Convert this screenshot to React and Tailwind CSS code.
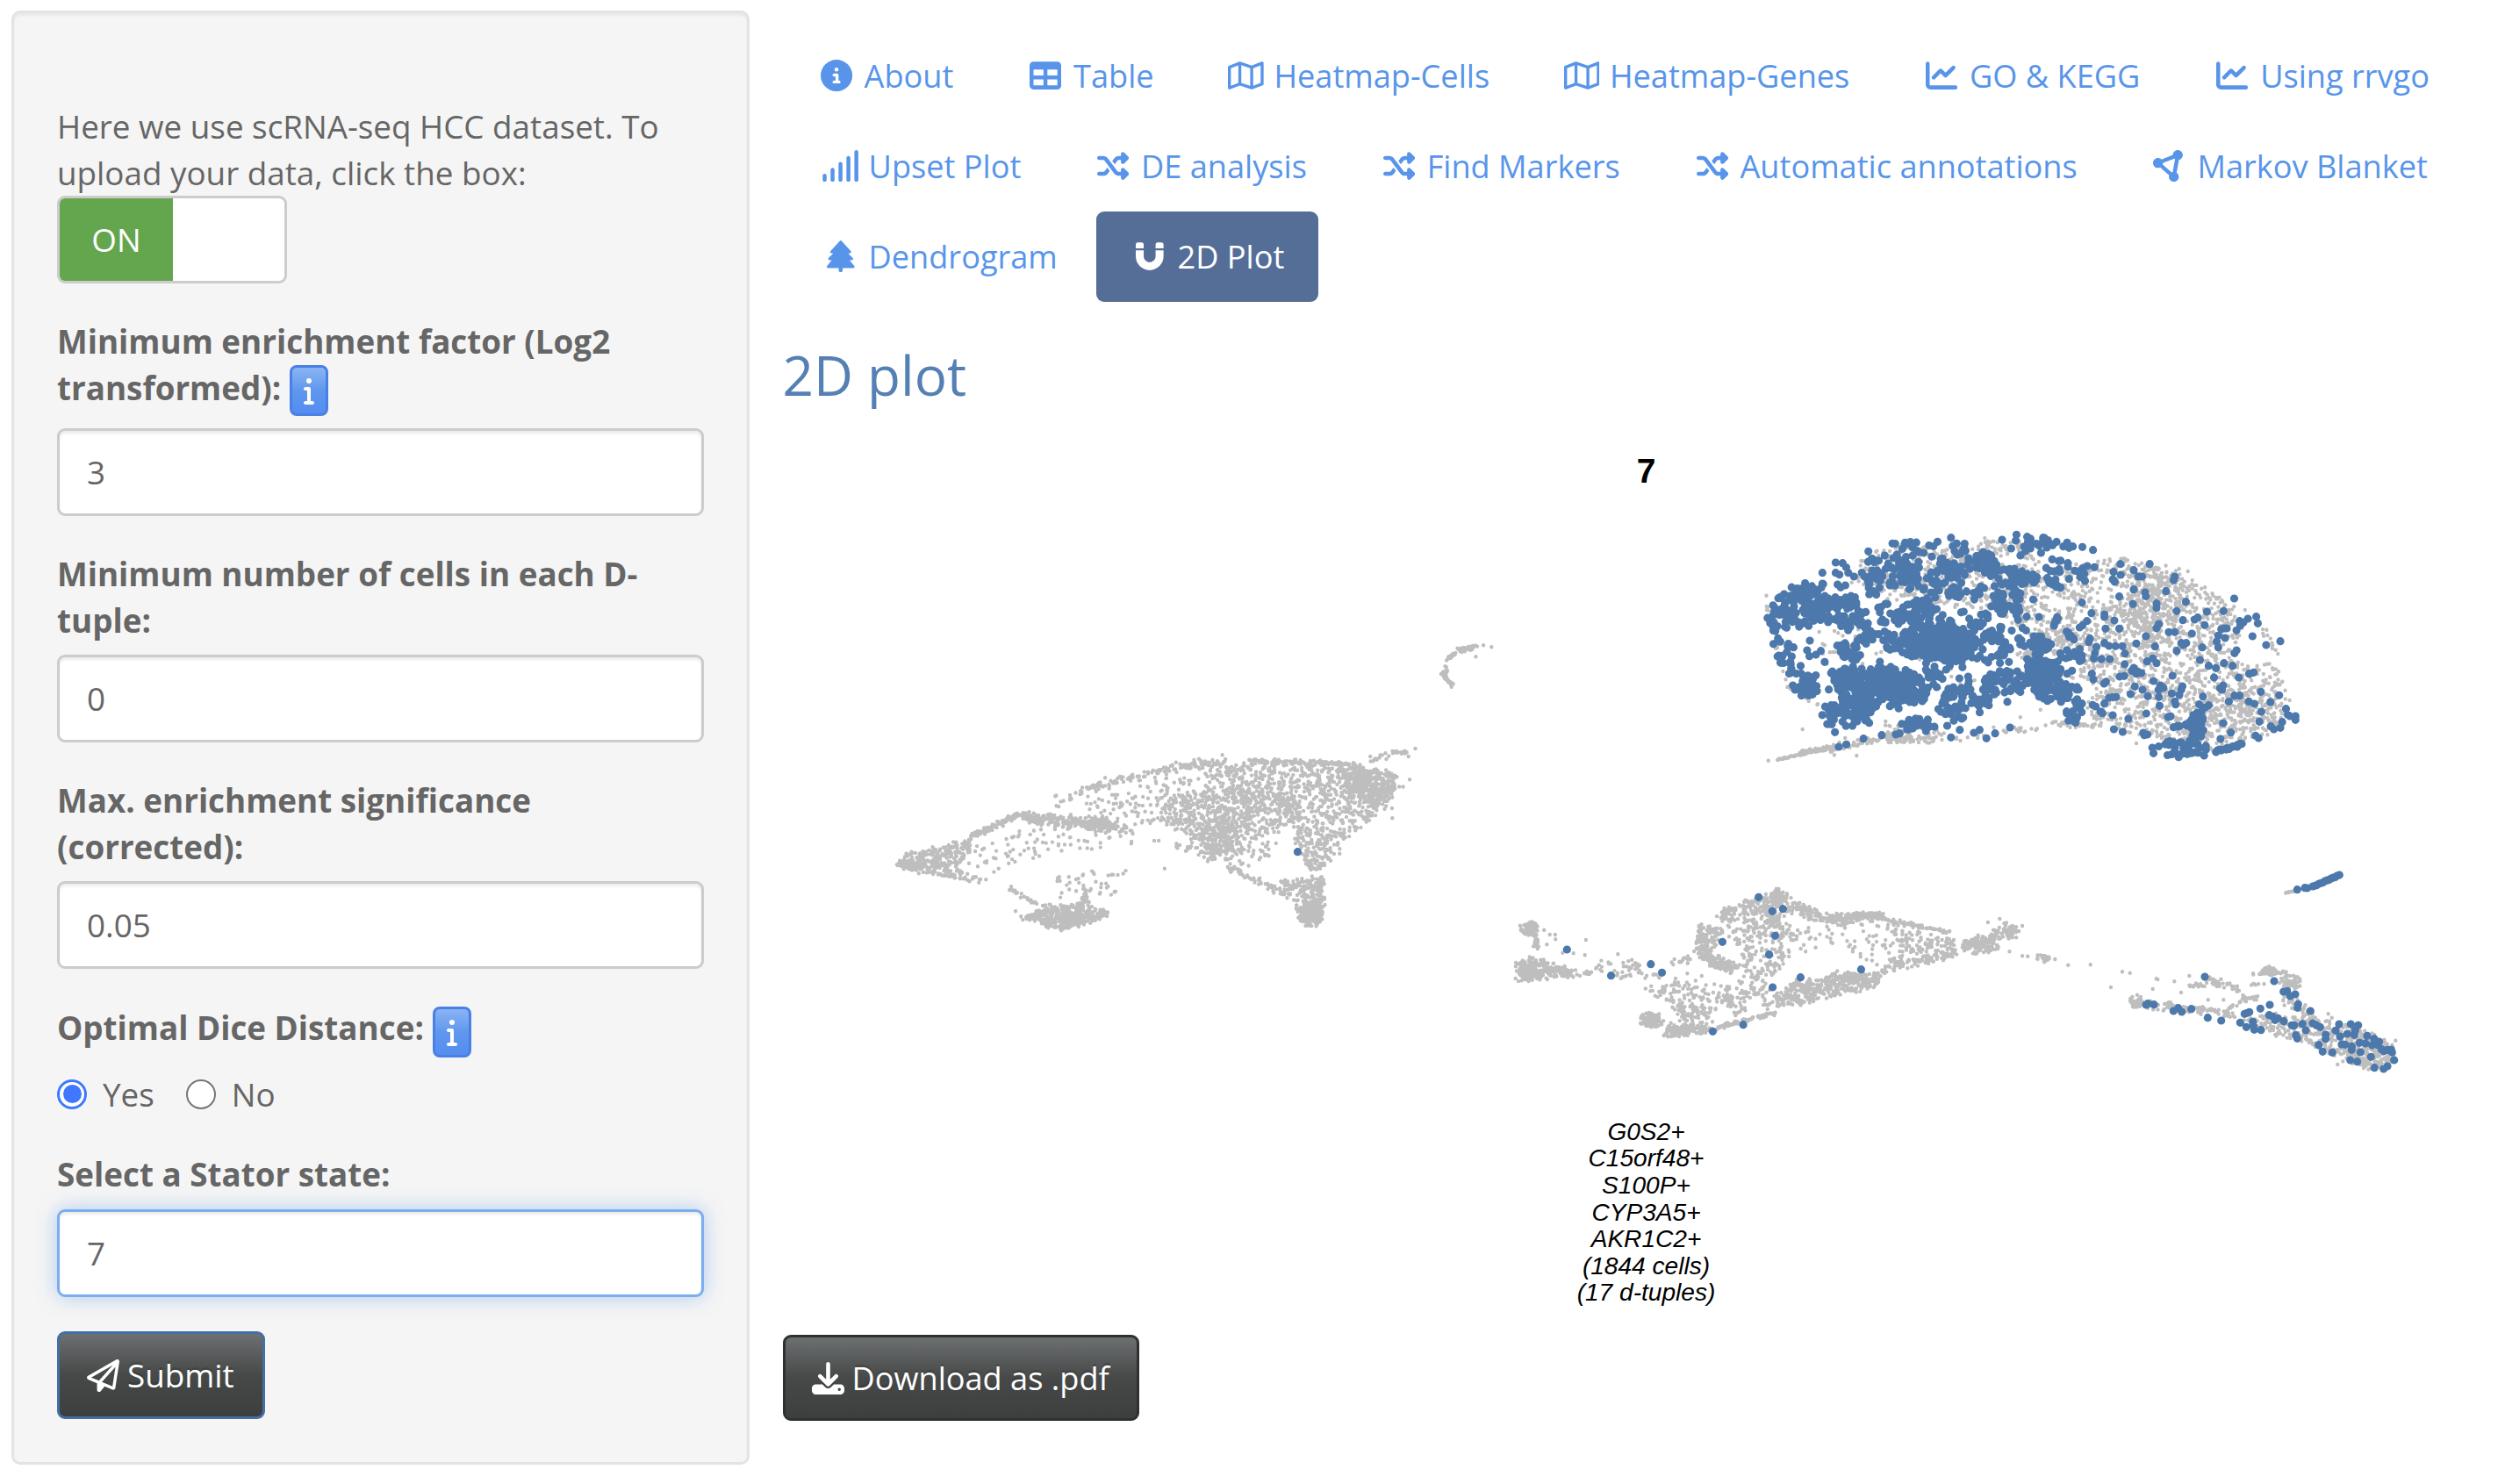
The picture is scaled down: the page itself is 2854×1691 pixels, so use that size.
import React from "react";
import {
  FaCircleInfo, FaTable, FaRegMap, FaChartLine, FaSignal, FaShuffle,
  FaCircleNodes, FaTree, FaMagnet, FaRegPaperPlane, FaDownload, FaInfo,
} from "react-icons/fa6";

/* ---------- embedding data ---------- */

let seed = 20240607;
function rnd() {
  seed = (seed + 0x6d2b79f5) | 0;
  let t = Math.imul(seed ^ (seed >>> 15), 1 | seed);
  t = (t + Math.imul(t ^ (t >>> 7), 61 | t)) ^ t;
  return ((t ^ (t >>> 14)) >>> 0) / 4294967296;
}
const gauss = () => (rnd() + rnd() + rnd() - 1.5) / 1.5;

function inside(x, y, p) {
  let hit = false;
  for (let i = 0, j = p.length - 2; i < p.length; j = i, i += 2) {
    if (p[i + 1] > y !== p[j + 1] > y && x < ((p[j] - p[i]) * (y - p[i + 1])) / (p[j + 1] - p[i + 1]) + p[i]) hit = !hit;
  }
  return hit;
}
function poly(n, p, soft = 0) {
  const xs = p.filter((_, i) => i % 2 === 0);
  const ys = p.filter((_, i) => i % 2 === 1);
  const x0 = Math.min(...xs), x1 = Math.max(...xs), y0 = Math.min(...ys), y1 = Math.max(...ys);
  const out = [];
  while (out.length < n) {
    const x = x0 + rnd() * (x1 - x0), y = y0 + rnd() * (y1 - y0);
    if (inside(x, y, p)) out.push([x + gauss() * soft, y + gauss() * soft]);
  }
  return out;
}
function blob(n, cx, cy, rx, ry) {
  return Array.from({ length: n }, () => {
    const a = rnd() * Math.PI * 2, r = Math.pow(rnd(), 0.75) * 1.12;
    return [cx + Math.cos(a) * r * rx, cy + Math.sin(a) * r * ry];
  });
}
function line(n, x0, y0, x1, y1, s) {
  return Array.from({ length: n }, () => {
    const t = rnd();
    return [x0 + (x1 - x0) * t + gauss() * s * 0.8, y0 + (y1 - y0) * t + gauss() * s * 1.15];
  });
}
const dots = (flat) => flat.reduce((a, v, i) => (i % 2 ? a : [...a, [v, flat[i + 1]]]), []);
const drop = (pts, holes) => pts.filter(([x, y]) => !holes.some((h) => ((x - h[0]) / h[2]) ** 2 + ((y - h[1]) / h[3]) ** 2 < 1));
const toPath = (pts, ox, oy, sx, sy) =>
  pts.map(([x, y]) => `M${(ox + x / sx).toFixed(1)} ${(oy + y / sy).toFixed(1)}h0`).join("");

const hepGrey = [
  ...drop([
    ...poly(1900, [740, 240, 860, 200, 1000, 155, 1130, 205, 1260, 290, 1330, 345, 1310, 480, 1415, 540, 1450, 620, 1435, 720, 1370, 780, 1230, 825, 1060, 765, 930, 735, 900, 650, 870, 560, 760, 420, 700, 380], 12),
    ...poly(560, [330, 155, 440, 105, 560, 130, 650, 90, 760, 110, 800, 200, 740, 330, 640, 340, 400, 310, 300, 250], 8),
  ], [[845, 320, 34, 20], [900, 620, 26, 45], [1350, 500, 34, 36], [720, 170, 34, 20], [880, 540, 20, 30]]),
  ...blob(90, 1110, 240, 80, 46), ...blob(200, 1060, 370, 90, 90), ...blob(120, 1340, 690, 80, 80),
  ...blob(40, 865, 435, 40, 25), ...blob(30, 758, 500, 25, 15), ...poly(60, [200, 400, 420, 400, 640, 560, 600, 680, 240, 560], 10),
  ...line(34, 100, 855, 180, 832, 4), ...line(70, 160, 832, 260, 812, 12), ...line(60, 240, 815, 420, 775, 24),
  ...poly(80, [380, 720, 540, 755, 550, 785, 530, 800, 400, 795], 8),
  ...line(26, 560, 780, 800, 745, 20), ...line(36, 800, 728, 960, 735, 16),
  ...line(30, 75, 320, 130, 600, 8), ...line(24, 130, 600, 230, 680, 10), ...line(12, 1380, 410, 1420, 500, 20),
  ...dots([75, 293, 80, 857, 170, 750, 312, 840, 1047, 798, 795, 683, 742, 709]),
];
const hepBlue = [
  ...drop([
    ...poly(230, [430, 330, 480, 285, 560, 380, 690, 345, 630, 420, 610, 500, 560, 530, 470, 500, 390, 480, 370, 380], 10),
    ...blob(190, 520, 450, 100, 55),
    ...poly(165, [80, 350, 95, 300, 170, 245, 210, 270, 240, 310, 330, 290, 350, 400, 250, 410, 130, 395, 85, 420], 10),
    ...poly(62, [340, 190, 390, 120, 480, 105, 480, 180, 440, 260, 350, 300, 330, 250], 8),
    ...poly(52, [430, 200, 560, 170, 570, 240, 480, 300, 430, 260], 14),
    ...poly(14, [480, 110, 600, 90, 600, 160, 500, 180], 8),
    ...poly(36, [605, 165, 660, 130, 690, 190, 650, 205, 610, 200], 6),
    ...poly(92, [645, 200, 720, 190, 800, 235, 740, 270, 740, 350, 660, 370, 690, 260], 8),
    ...poly(22, [770, 98, 805, 94, 840, 112, 800, 150, 730, 170], 5),
    ...poly(14, [790, 160, 850, 170, 840, 270, 800, 230]),
    ...poly(20, [570, 200, 640, 230, 640, 330, 540, 310], 10),
    ...poly(250, [240, 560, 260, 530, 330, 540, 450, 550, 500, 645, 430, 675, 370, 670, 340, 720, 290, 740, 265, 640], 8),
    ...blob(110, 390, 600, 80, 58),
    ...poly(58, [90, 440, 150, 440, 150, 520, 205, 560, 215, 640, 155, 635, 135, 560, 98, 510], 7),
    ...poly(42, [250, 470, 340, 400, 380, 430, 320, 510, 260, 510], 10),
    ...poly(24, [460, 520, 560, 530, 540, 600, 490, 620], 10),
    ...blob(34, 280, 700, 60, 40), ...blob(24, 475, 735, 42, 22),
    ...poly(58, [520, 690, 540, 600, 640, 590, 680, 620, 640, 700, 570, 720], 10),
    ...poly(56, [640, 560, 760, 540, 760, 620, 660, 635], 10),
    ...poly(125, [750, 540, 780, 510, 850, 520, 850, 590, 895, 610, 850, 670, 790, 645], 7),
    ...blob(32, 798, 460, 28, 35), ...poly(22, [860, 410, 880, 410, 915, 520, 845, 510], 8),
    ...poly(24, [600, 450, 680, 400, 720, 440, 700, 510, 620, 525], 6),
    ...blob(20, 882, 690, 26, 44),
    ...poly(75, [110, 330, 340, 150, 560, 130, 640, 200, 740, 360, 600, 380, 460, 300, 340, 380, 160, 380]),
    ...poly(26, [560, 540, 720, 520, 780, 420, 720, 360, 640, 420, 620, 520]),
  ], [[295, 715, 18, 10], [280, 350, 16, 12], [190, 425, 30, 14], [512, 200, 14, 14], [400, 280, 26, 18], [475, 525, 18, 12], [610, 250, 18, 30], [590, 330, 24, 14], [690, 155, 24, 16]]),
  ...blob(38, 1160, 815, 66, 27), ...line(24, 1250, 828, 1330, 800, 5), ...blob(44, 1205, 735, 18, 44), ...line(9, 1140, 745, 1190, 735, 6),
  ...line(8, 842, 365, 830, 400, 4), ...line(6, 815, 245, 848, 268, 4),
  ...dots([
    222, 215, 257, 180, 275, 182, 343, 142, 257, 215, 222, 252, 290, 215, 305, 228, 262, 255, 270, 265, 560, 95, 575, 115,
    694, 102, 732, 85, 730, 105, 760, 92, 762, 110, 718, 132, 802, 95, 865, 112, 855, 125, 870, 130, 880, 125, 905, 127, 933, 137,
    189, 447, 182, 480, 205, 495, 218, 482, 188, 500, 228, 520, 373, 519, 373, 350, 393, 322, 239, 614, 590, 538, 605, 570, 582, 576, 607, 586,
    255, 760, 330, 782, 378, 770, 415, 768, 425, 764, 265, 810, 285, 802, 560, 778, 583, 752, 620, 762, 635, 752, 653, 781, 676, 764, 715, 744, 708, 656, 550, 738, 345, 728,
    776, 306, 759, 365, 791, 366, 732, 360, 736, 376, 748, 404, 757, 412, 753, 466, 760, 510, 688, 490, 695, 498, 712, 520,
    1005, 185, 1082, 185, 1148, 228, 1145, 240, 987, 212, 1006, 222, 1040, 206, 1052, 228, 1062, 228, 985, 238, 990, 246, 867, 182, 867, 195, 870, 236,
    885, 208, 895, 212, 905, 200, 918, 192, 937, 196, 912, 243, 900, 230, 910, 218, 1040, 272, 1070, 282, 1072, 295, 1125, 278, 1177, 314, 1002, 296, 904, 317,
    1038, 322, 1100, 320, 1100, 335, 1153, 346, 1232, 348, 1276, 346, 1304, 303, 929, 353, 963, 358, 963, 366, 989, 378, 917, 380, 905, 395, 898, 402,
    966, 406, 1002, 406, 1106, 390, 1100, 404, 1169, 377, 1200, 375, 1208, 368, 1226, 394, 1362, 365, 1340, 372, 1328, 385, 1318, 380, 1366, 388,
    1320, 395, 1310, 412, 1278, 405, 1270, 408, 1284, 405, 1352, 432, 1388, 462, 1425, 449, 1132, 418, 1148, 418, 1193, 423, 1072, 432, 925, 440, 922, 452,
    1262, 430, 1280, 438, 1258, 450, 1262, 470, 1220, 470, 1165, 455, 1178, 455, 1170, 462, 1096, 467, 1047, 457, 1010, 466, 992, 466, 975, 465, 963, 455, 1153, 482,
    1310, 480, 1305, 490, 942, 468, 938, 490, 935, 508, 955, 510, 977, 510, 1017, 491, 1016, 528, 1090, 508, 1075, 518, 1100, 524, 1040, 540, 1050, 552,
    1060, 558, 1035, 550, 1047, 560, 1214, 513, 1237, 533, 1277, 524, 1300, 533, 1256, 541, 1355, 556, 1343, 560, 930, 560, 934, 580, 967, 588, 962, 594,
    1003, 570, 1015, 568, 1092, 585, 1142, 567, 1251, 573, 1316, 573, 1267, 610, 1275, 600, 1272, 615, 1043, 604, 1063, 615, 1077, 637, 1032, 630,
    1110, 600, 1105, 615, 1118, 608, 1106, 640, 1140, 628, 1168, 603, 1165, 615, 1160, 632, 1148, 655, 1150, 665, 1222, 638, 1305, 635, 1318, 635,
    1374, 622, 1422, 634, 1290, 655, 1342, 655, 1357, 663, 1399, 657, 1375, 690, 1370, 724, 985, 640, 975, 642, 994, 640, 963, 662, 932, 667, 940, 672,
    953, 690, 958, 695, 985, 702, 894, 660, 1026, 714, 1073, 696, 1108, 670, 1130, 708, 1137, 706, 988, 750, 1011, 759, 1065, 762, 1068, 770, 1076, 768,
    1275, 729, 1295, 761, 1268, 783, 1360, 772, 1368, 780, 1440, 680, 1445, 700, 1465, 705, 1465, 718, 1450, 705, 1430, 725, 1425, 745, 1408, 750, 1400, 740,
    1237, 668, 1212, 665, 1228, 675, 1218, 690, 1092, 832, 1158, 845, 1225, 840, 878, 550, 865, 560, 872, 610,
  ]),
];
const leftGrey = [
  ...poly(290, [50, 855, 70, 815, 180, 785, 240, 750, 215, 830, 200, 870, 280, 915, 170, 895, 65, 870], 10),
  ...line(60, 50, 848, 110, 855, 16),
  ...line(90, 235, 755, 350, 680, 12), ...poly(270, [330, 685, 390, 675, 500, 695, 570, 695, 640, 745, 500, 725, 380, 710], 18),
  ...poly(80, [220, 800, 280, 750, 400, 725, 640, 750, 640, 785, 460, 815, 310, 870, 230, 910], 10),
  ...line(70, 500, 600, 700, 530, 20), ...line(80, 690, 530, 860, 500, 18), ...poly(14, [430, 620, 520, 590, 600, 620, 440, 680]),
  ...poly(130, [500, 650, 700, 560, 860, 540, 760, 720, 600, 700], 14),
  ...poly(640, [720, 630, 800, 605, 960, 595, 1050, 640, 1040, 700, 900, 780, 850, 820, 800, 770, 700, 695], 26),
  ...poly(120, [820, 700, 890, 700, 895, 790, 830, 840, 800, 760], 16),
  ...poly(720, [800, 520, 1000, 500, 1160, 508, 1280, 530, 1295, 580, 1240, 680, 1160, 760, 1050, 740, 1000, 640, 860, 600], 14),
  ...poly(200, [1100, 508, 1200, 515, 1290, 545, 1295, 595, 1250, 620, 1180, 600], 14), ...blob(110, 1220, 600, 60, 60),
  ...line(90, 920, 496, 1200, 510, 10),
  ...poly(150, [1030, 720, 1160, 750, 1125, 860, 1070, 870, 1040, 780], 14), ...poly(70, [680, 765, 900, 800, 1000, 760, 950, 860, 840, 850], 12),
  ...poly(230, [1000, 910, 1110, 890, 1108, 1000, 1100, 1050, 1050, 1050, 1035, 965], 8), ...blob(140, 1076, 1025, 27, 38),
  ...line(60, 870, 860, 1030, 965, 14),
  ...poly(300, [380, 1030, 420, 990, 500, 985, 575, 1015, 560, 1040, 500, 1055, 460, 1075, 430, 1070], 10), ...blob(90, 470, 1035, 60, 34), ...line(34, 522, 940, 505, 1000, 14),
  ...poly(42, [430, 880, 620, 870, 600, 960, 520, 990, 440, 960]), ...line(24, 325, 935, 400, 990, 12), ...line(20, 360, 1040, 400, 1020, 12),
  ...line(14, 1210, 500, 1280, 475, 18), ...line(16, 1275, 470, 1312, 470, 7),
  ...line(34, 1412, 150, 1450, 115, 7), ...line(40, 1440, 118, 1486, 108, 11), ...line(20, 1400, 203, 1414, 190, 5), ...line(34, 1402, 202, 1425, 238, 7), ...dots([1424, 245, 1408, 175, 1411, 178]),
  ...dots([1334, 456, 1317, 483, 1320, 562, 1503, 103, 1523, 109, 1484, 142, 1277, 694, 1276, 660, 855, 478, 712, 866, 342, 1012]),
];
const midGrey = [
  ...blob(60, 103, 230, 24, 22), ...line(26, 120, 250, 125, 300, 12), ...blob(120, 105, 370, 30, 38), ...blob(60, 110, 375, 52, 42),
  ...poly(90, [130, 340, 200, 360, 280, 385, 200, 400, 130, 395], 12), ...poly(46, [280, 370, 310, 340, 430, 350, 470, 395, 370, 400], 10), ...line(14, 490, 350, 560, 335, 16),
  ...poly(140, [575, 225, 650, 230, 620, 290, 610, 350, 565, 310], 12), ...poly(140, [565, 310, 630, 330, 690, 360, 670, 380, 610, 360], 14),
  ...poly(180, [635, 170, 740, 120, 820, 115, 860, 160, 800, 200, 700, 175, 635, 220], 14), ...blob(70, 800, 120, 23, 26), ...blob(40, 785, 205, 20, 25),
  ...poly(230, [650, 220, 700, 170, 800, 190, 850, 250, 820, 350, 760, 420, 690, 410, 700, 300], 16),
  ...poly(150, [840, 140, 900, 165, 980, 185, 1090, 180, 1090, 200, 980, 220, 870, 195], 12), ...line(80, 990, 188, 1090, 184, 14),
  ...line(80, 1080, 195, 1280, 245, 8), ...poly(120, [850, 220, 1120, 215, 1280, 240, 1300, 320, 1100, 370, 1000, 320, 860, 310]),
  ...poly(60, [1110, 240, 1290, 250, 1300, 320, 1150, 320]),
  ...poly(330, [790, 490, 850, 410, 980, 395, 1130, 370, 1060, 435, 960, 460, 860, 490], 16), ...blob(60, 985, 400, 50, 25),
  ...line(80, 1100, 365, 1300, 315, 22), ...line(100, 1320, 290, 1460, 235, 24), ...blob(80, 1365, 290, 50, 26), ...blob(30, 1435, 240, 40, 26),
  ...blob(24, 1535, 332, 20, 14), ...blob(110, 445, 545, 30, 26),
  ...poly(120, [475, 600, 495, 555, 595, 565, 595, 588, 530, 600], 10), ...line(90, 580, 585, 790, 520, 10),
  ...poly(210, [420, 430, 560, 410, 700, 430, 850, 430, 800, 490, 690, 525, 530, 540, 480, 490], 10), ...poly(40, [520, 490, 600, 500, 620, 560, 520, 550]),
  ...dots([145, 236, 176, 252, 161, 252, 177, 268, 262, 270, 227, 316, 259, 322, 351, 319, 153, 286, 197, 314, 1417, 198, 1384, 210, 1480, 222, 1444, 310, 1480, 325, 1495, 326, 390, 338, 545, 385, 512, 402, 585, 393]),
];
const midBlue = dots([744, 124, 782, 172, 812, 164, 790, 256, 643, 277, 773, 320, 209, 303, 443, 353, 474, 382, 332, 392, 1030, 371, 861, 398, 783, 432, 701, 560, 616, 583]);
const rightGrey = [
  ...dots([4, 396, 49, 416, 125, 415, 195, 492, 234, 439, 260, 443, 350, 463, 355, 465, 412, 472, 463, 453, 338, 498, 435, 510, 527, 535, 580, 535, 970, 756, 1168, 674, 938, 583, 950, 596]),
  ...blob(50, 285, 540, 24, 20), ...line(60, 310, 548, 500, 570, 16), ...line(34, 490, 560, 620, 590, 20), ...line(16, 460, 488, 520, 480, 12),
  ...line(36, 520, 465, 640, 500, 16), ...line(20, 640, 530, 695, 530, 12), ...line(12, 590, 570, 640, 540, 12), ...blob(50, 738, 436, 22, 14), ...line(26, 680, 447, 795, 440, 5),
  ...blob(56, 808, 475, 34, 24), ...line(6, 670, 485, 720, 480, 6), ...line(46, 770, 510, 890, 600, 26),
  ...poly(370, [630, 600, 760, 585, 900, 595, 1040, 625, 1160, 690, 1165, 740, 1145, 770, 1040, 770, 960, 725, 850, 680, 720, 645], 10),
  ...poly(140, [970, 650, 1100, 660, 1160, 720, 1140, 775, 1040, 768, 980, 720], 6), ...line(14, 792, 170, 830, 161, 2.5),
];
const rightBlue = [
  ...Array.from({ length: 14 }, (_, i) => [885 + i * 7, 147 - i * 3.05 + (i % 3)]),
  ...dots([
    832, 158, 858, 152, 866, 153, 516, 456, 315, 552, 322, 548, 342, 551, 409, 573, 425, 563, 437, 576, 470, 566, 526, 596, 572, 606, 637, 613, 658, 628, 680, 610, 682, 624, 685, 637,
    708, 638, 652, 583, 668, 577, 660, 580, 706, 565, 738, 552, 753, 471, 785, 507, 797, 505, 808, 522, 825, 516, 833, 562, 835, 550, 877, 573, 736, 587, 748, 592, 756, 604,
    766, 598, 786, 608, 813, 622, 822, 622, 850, 617, 861, 639, 885, 615, 897, 622, 910, 628, 827, 656, 832, 667, 929, 654, 929, 668, 905, 689, 919, 712, 952, 715, 963, 640,
    975, 618, 978, 660, 1003, 651, 1015, 618, 1040, 622, 1030, 640, 1027, 655, 984, 687, 995, 688, 1018, 694, 1018, 706, 1048, 714, 1045, 682, 1065, 684, 1088, 690, 1071, 658,
    1095, 668, 1112, 678, 1108, 690, 1120, 704, 1128, 710, 1140, 706, 1153, 705, 1156, 714, 1163, 741, 1084, 730, 1013, 741, 1037, 746, 1096, 767, 1127, 771, 1140, 762,
  ]),
];

const greyPath =
  toPath(hepGrey, 1980, 580, 2.306, 3) + toPath(leftGrey, 1000, 700, 2.178, 3) +
  toPath(midGrey, 1700, 980, 2.45, 3) + toPath(rightGrey, 2340, 960, 3, 3);
const bluePath =
  toPath(hepBlue, 1980, 580, 2.306, 3) + toPath([[1042, 809]], 1000, 700, 2.178, 3) +
  toPath(midBlue, 1700, 980, 2.45, 3) + toPath(rightBlue, 2340, 960, 3, 3);

/* ---------- controls ---------- */

const inputBase = "block h-[100px] w-full rounded-[9px] border-3 bg-white px-[31px] outline-none";

function Field({ value, focused }) {
  return (
    <input
      readOnly
      value={value}
      className={
        focused
          ? `${inputBase} border-[#7aaeee] shadow-[inset_0_3px_3px_rgba(0,0,0,0.075),0_0_21px_rgba(102,160,233,0.5)]`
          : `${inputBase} border-[#cccccc] shadow-[inset_0_3px_3px_rgba(0,0,0,0.075)]`
      }
    />
  );
}

function InfoButton() {
  return (
    <span className="ml-[10px] inline-flex h-[58px] w-[44px] items-center justify-center rounded-[8px] border-3 border-[#4a80e6] bg-linear-to-b from-[#8ab4f3] via-[#5f97ee] via-50% to-[#548df0] text-white">
      <FaInfo className="h-[32px] w-[12px]" />
    </span>
  );
}

function Label({ children, className }) {
  return <div className={`font-bold ${className}`}>{children}</div>;
}

function Sidebar() {
  return (
    <aside className="mt-[12px] ml-[13px] h-[1657px] w-[841px] shrink-0 rounded-[10px] border-3 border-[#e3e3e3] bg-[#f5f5f5] px-[49px] pt-[103px] text-[36.8px] shadow-[inset_0_3px_3px_rgba(0,0,0,0.05)]">
      <p className="h-[105px] leading-[52.5px] whitespace-nowrap">
        Here we use scRNA-seq HCC dataset. To
        <br />
        upload your data, click the box:
      </p>
      <div className="flex h-[100px] w-[262px] overflow-hidden rounded-[9px] border-3 border-[#cccccc] bg-white">
        <div className="flex w-[129px] items-center justify-center bg-[#64a64d] text-white">ON</div>
      </div>
      <Label className="mt-[40px] h-[125px] leading-[53px] whitespace-nowrap">
        Minimum enrichment factor (Log2
        <div className="flex items-start">
          <span>transformed):</span>
          <InfoButton />
        </div>
      </Label>
      <Field value="3" />
      <Label className="mt-[40px] h-[118px] leading-[53px]">Minimum number of cells in each D-<br />tuple:</Label>
      <Field value="0" />
      <Label className="mt-[40px] h-[118px] leading-[53px]">Max. enrichment significance<br />(corrected):</Label>
      <Field value="0.05" />
      <Label className="mt-[41px] flex h-[76px]">
        <span>Optimal Dice Distance:</span>
        <span className="mt-[2px]"><InfoButton /></span>
      </Label>
      <div className="flex h-[51px] items-center">
        <span className="flex size-[34px] items-center justify-center rounded-full border-3 border-[#3f78ff] bg-white">
          <span className="size-[21px] rounded-full bg-[#3f78ff]" />
        </span>
        <span className="ml-[18px]">Yes</span>
        <span className="ml-[36px] size-[34px] rounded-full border-2 border-[#767676] bg-white" />
        <span className="ml-[18px]">No</span>
      </div>
      <Label className="mt-[40px] h-[66px]">Select a Stator state:</Label>
      <Field value="7" focused />
      <button className="mt-[39px] flex h-[100px] w-[237px] items-center rounded-[9px] border-3 border-[#446ea6] bg-linear-to-b from-[#6d7070] via-[#474949] via-50% to-[#3d3f3f] pl-[31px] text-white [text-shadow:0_-3px_0_rgba(0,0,0,0.15)]">
        <FaRegPaperPlane className="mr-[9px] size-[37px]" />
        Submit
      </button>
    </aside>
  );
}

/* ---------- navigation ---------- */

const TABS = [
  ["About", FaCircleInfo, "w-[1em]"],
  ["Table", FaTable, "w-[1em]"],
  ["Heatmap-Cells", FaRegMap, "w-[1.125em]"],
  ["Heatmap-Genes", FaRegMap, "w-[1.125em]"],
  ["GO & KEGG", FaChartLine, "w-[1em]"],
  ["Using rrvgo", FaChartLine, "w-[1em]"],
  ["Upset Plot", FaSignal, "w-[1.25em]"],
  ["DE analysis", FaShuffle, "w-[1em]"],
  ["Find Markers", FaShuffle, "w-[1em]"],
  ["Automatic annotations", FaShuffle, "w-[1em]"],
  ["Markov Blanket", FaCircleNodes, "w-[1em]"],
  ["Dendrogram", FaTree, "w-[0.875em]"],
  ["2D Plot", FaMagnet, "w-[0.875em]"],
];

function Tabs() {
  return (
    <nav className="flex flex-wrap">
      {TABS.map(([label, Icon, width], i) => (
        <a
          key={label}
          className={`flex h-[103.3px] items-center rounded-[9px] px-[38.7px] whitespace-nowrap ${i ? "ml-[5px]" : ""} ${
            label === "2D Plot" ? "bg-[#546e98] text-white" : "text-[#5895ea]"
          }`}
        >
          <span className="mr-[9.4px] flex w-[45px] justify-center">
            <Icon className={`h-[1em] shrink-0 ${width}`} />
          </span>
          {label}
        </a>
      ))}
    </nav>
  );
}

/* ---------- plot ---------- */

const CAPTION = ["G0S2+", "C15orf48+", "S100P+", "CYP3A5+", "AKR1C2+", "(1844 cells)", "(17 d-tuples)"];

function Plot() {
  return (
    <figure className="w-[1968px] font-['Liberation_Sans',Arial,sans-serif] text-black">
      <figcaption className="h-[46px] text-center text-[39px] leading-[44px] font-bold">7</figcaption>
      <svg viewBox="892 560 1968 714" className="block h-[714px] w-[1968px]" fill="none" strokeLinecap="round">
        <path d={greyPath} stroke="#bebebe" strokeWidth="4.4" />
        <path d={bluePath} stroke="#4c78ab" strokeWidth="9.2" />
      </svg>
      <div className="text-center text-[28.1px] leading-[30.6px] italic">
        {CAPTION.map((t) => (
          <div key={t}>{t}</div>
        ))}
      </div>
    </figure>
  );
}

export default function App() {
  return (
    <div className="flex h-[1691px] w-[2854px] overflow-hidden bg-white font-['Open_Sans',sans-serif] text-[36.15px] leading-[52px] text-[#666666]">
      <Sidebar />
      <main className="ml-[37.5px] w-[1962px] pt-[34px]">
        <Tabs />
        <h3 className="mt-[49px] h-[122px] text-[62px] leading-[69px] text-[#5580b4]">2D plot</h3>
        <Plot />
        <button className="mt-[32px] flex h-[98px] w-[406px] items-center rounded-[9px] border-3 border-[#2f3030] bg-linear-to-b from-[#6d7070] via-[#474949] via-50% to-[#3d3f3f] pl-[30px] text-white [text-shadow:0_-3px_0_rgba(0,0,0,0.15)]">
          <FaDownload className="mr-[9px] size-[37px]" />
          Download as .pdf
        </button>
      </main>
    </div>
  );
}
